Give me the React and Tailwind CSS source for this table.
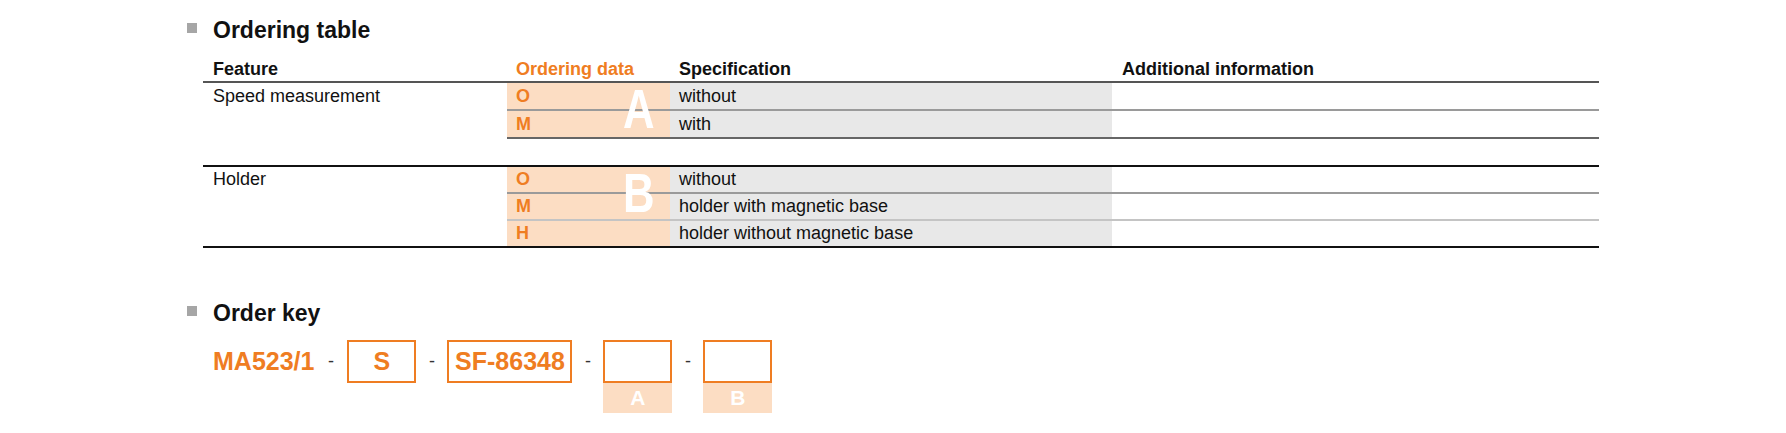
import React from "react";

const groups = [
  {
    feature: "Speed measurement",
    letter: "A",
    rows: [
      ["O", "without"],
      ["M", "with"],
    ],
  },
  {
    feature: "Holder",
    letter: "B",
    rows: [
      ["O", "without"],
      ["M", "holder with magnetic base"],
      ["H", "holder without magnetic base"],
    ],
  },
];

function SectionTitle({ children, className = "" }) {
  return (
    <div className={`flex items-start ${className}`}>
      <span className="mt-[7px] ml-[187px] mr-[16px] w-[10px] h-[10px] bg-[#a6a6a6]" />
      <h2 className="text-[23px] leading-[28px] font-bold text-[#111]">{children}</h2>
    </div>
  );
}

function BigLetter({ children }) {
  return (
    <span className="absolute -top-[2px] left-0 w-[163px] pr-[16px] text-right text-[56px] leading-none font-bold text-white">
      <span className="inline-block scale-x-[0.78] origin-right">{children}</span>
    </span>
  );
}

function Dash({ w = "w-[31px]" }) {
  return <div className={`${w} h-[43px] flex items-center justify-center text-[18px] text-[#333]`}>-</div>;
}

function KeyBox({ w, label, children }) {
  return (
    <div className="flex flex-col">
      <div className={`${w} h-[43px] border-2 border-[#ef7d22] flex items-center justify-center text-[25px] font-bold text-[#ef7d22]`}>
        {children}
      </div>
      {label && (
        <div className={`${w} h-[30px] bg-[#fcddc3] flex items-center justify-center text-[21px] font-bold text-white`}>
          {label}
        </div>
      )}
    </div>
  );
}

export default function App() {
  const [speed, holder] = groups;

  return (
    <div className="w-[1786px] h-[433px] bg-white pt-[16px] font-['Liberation_Sans',Arial,sans-serif] text-[#111]">
      <SectionTitle>Ordering table</SectionTitle>

      <div className="ml-[203px] w-[1396px] mt-[13px] text-[18px]">
        {/* header */}
        <div className="grid grid-cols-[304px_163px_442px_487px] leading-[24px] font-bold border-b-2 border-[#555]">
          <div className="pl-[10px]">Feature</div>
          <div className="pl-[9px] text-[#ef7d22]">Ordering data</div>
          <div className="pl-[9px]">Specification</div>
          <div className="pl-[10px]">Additional information</div>
        </div>

        {/* speed measurement */}
        <div className="flex">
          <div className="w-[304px] pl-[10px] leading-[26px]">{speed.feature}</div>
          <div className="flex-1 relative">
            {speed.rows.map(([code, spec], i) => (
              <div
                key={code}
                className={`grid grid-cols-[163px_442px_487px] leading-[26px] border-b-2 ${
                  i === speed.rows.length - 1 ? "border-[#666]" : "border-[#9a9a9a]"
                }`}
              >
                <div className="bg-[#fcddc3] pl-[9px] font-bold text-[#ef7d22]">{code}</div>
                <div className="bg-[#e8e8e8] pl-[9px]">{spec}</div>
                <div />
              </div>
            ))}
            <BigLetter>{speed.letter}</BigLetter>
          </div>
        </div>

        {/* holder */}
        <div className="flex mt-[26px] border-t-2 border-b-2 border-[#111]">
          <div className="w-[304px] pl-[10px] leading-[25px]">{holder.feature}</div>
          <div className="flex-1 relative">
            {holder.rows.map(([code, spec], i) => (
              <div
                key={code}
                className={`grid grid-cols-[163px_442px_487px] leading-[25px] ${
                  i === 0 ? "border-b-2 border-[#9a9a9a]" : i === 1 ? "border-b-2 border-[#c4c4c4]" : ""
                }`}
              >
                <div className="bg-[#fcddc3] pl-[9px] font-bold text-[#ef7d22]">{code}</div>
                <div className="bg-[#e8e8e8] pl-[9px]">{spec}</div>
                <div />
              </div>
            ))}
            <BigLetter>{holder.letter}</BigLetter>
          </div>
        </div>
      </div>

      <SectionTitle className="mt-[51px]">Order key</SectionTitle>

      <div className="ml-[213px] mt-[13px] flex items-start">
        <div className="h-[43px] flex items-center text-[25px] font-bold text-[#ef7d22]">MA523/1</div>
        <Dash w="w-[33px]" />
        <KeyBox w="w-[69px]">S</KeyBox>
        <Dash />
        <KeyBox w="w-[125px]">SF-86348</KeyBox>
        <Dash />
        <KeyBox w="w-[69px]" label="A" />
        <Dash />
        <KeyBox w="w-[69px]" label="B" />
      </div>
    </div>
  );
}
